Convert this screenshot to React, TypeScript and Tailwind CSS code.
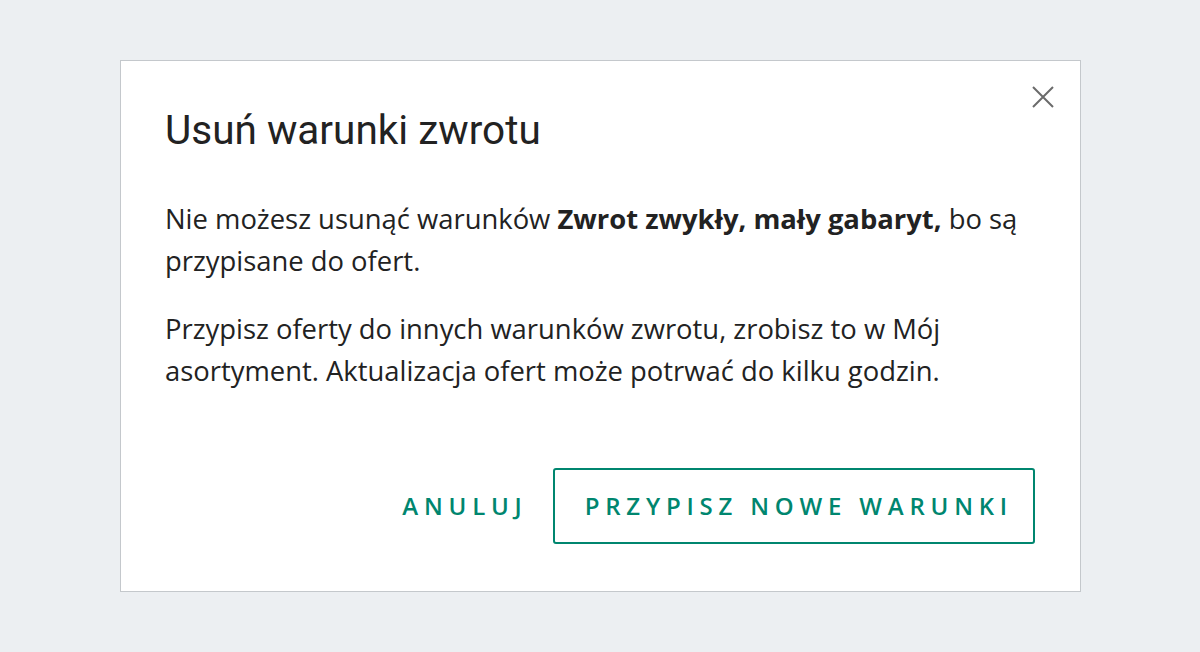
export default function App() {
  return (
    <div className="min-h-screen w-full bg-[#eceff2] pt-[60px] pl-[120px]">
      {/* Dialog */}
      <div className="relative box-border w-[961px] h-[532px] border border-[#c4c8cc] bg-white pl-[44px] pr-[45px] pt-[45px]">
        <button className="absolute right-[24px] top-[23px] w-[26px] h-[26px] flex items-center justify-center text-[#6b6b6b]">
          <svg width="24" height="24" viewBox="0 0 24 24" fill="none" stroke="currentColor" strokeWidth={2}>
            <path d="M2 2l20 20M22 2L2 22" />
          </svg>
        </button>

        <h2 className="font-['Roboto',sans-serif] text-[40.5px] leading-[48px] text-[#222222] font-normal">
          Usuń warunki zwrotu
        </h2>

        <div className="mt-[44px] font-['Open_Sans',sans-serif] text-[27.4px] leading-[42px] text-[#222222]">
          <p>
            Nie możesz usunąć warunków <b className="font-bold">Zwrot zwykły, mały gabaryt,</b> bo są przypisane do ofert.
          </p>
          <p className="mt-[26px]">
            Przypisz oferty do innych warunków zwrotu, zrobisz to w Mój asortyment. Aktualizacja ofert może potrwać do kilku godzin.
          </p>
        </div>

        <div className="mt-[76px] flex justify-end items-center gap-[25px] font-['Open_Sans',sans-serif] text-[24px] font-semibold tracking-[5.8px] text-[#00866f]">
          <button>ANULUJ</button>
          <button className="h-[76px] pl-[30px] pr-[20px] rounded-[3px] border-2 border-[#00866f]">PRZYPISZ NOWE WARUNKI</button>
        </div>
      </div>
    </div>
  );
}
